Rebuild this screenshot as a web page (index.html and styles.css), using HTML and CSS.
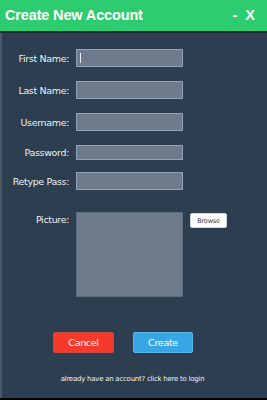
FILE: index.html
```html
<!DOCTYPE html>
<html>
<head>
<meta charset="utf-8">
<link rel="stylesheet" href="styles.css">
</head>
<body>
<div class="window">
  <div class="header">
    <span class="title">Create New Account</span>
    <span class="controls">-&nbsp; X</span>
  </div>
  <div class="content">
    <div class="form">
      <div class="row"><label class="label">First Name:</label><div class="input focused"><span class="caret"></span></div></div>
      <div class="row"><label class="label">Last Name:</label><div class="input"></div></div>
      <div class="row"><label class="label">Username:</label><div class="input"></div></div>
      <div class="row row-short"><label class="label">Password:</label><div class="input"></div></div>
      <div class="row"><label class="label">Retype Pass:</label><div class="input"></div></div>
      <div class="row row-picture"><label class="label">Picture:</label><div class="picture"></div><button class="browse">Browse</button></div>
    </div>
    <div class="actions">
      <button class="btn btn-cancel">Cancel</button>
      <button class="btn btn-create">Create</button>
    </div>
    <div class="footer">already have an account? click here to login</div>
  </div>
</div>
</body>
</html>
```
FILE: styles.css
```css
* { box-sizing: border-box; }
html, body { margin: 0; padding: 0; }
body {
  width: 267px;
  height: 400px;
  background: #000;
  font-family: "DejaVu Sans", "Liberation Sans", sans-serif;
  overflow: hidden;
}
.window {
  width: 267px;
  height: 398px;
  display: flex;
  flex-direction: column;
  background: #2c3e50;
}
.header {
  height: 33px;
  background: #2ecc71;
  border-bottom: 2px solid #1f2b38;
  display: flex;
  align-items: center;
  justify-content: space-between;
  padding: 0 12px 2px 5px;
  color: #fff;
  font-family: "Liberation Sans", sans-serif;
  font-weight: bold;
}
.title { font-size: 14.5px; letter-spacing: -0.15px; }
.controls { font-size: 14.5px; }
.content {
  flex: 1;
  display: flex;
  flex-direction: column;
  border-left: 2px solid #4b5868;
}
.form {
  padding-top: 16px;
  display: flex;
  flex-direction: column;
  gap: 14px;
}
.row {
  display: grid;
  grid-template-columns: 67px 107px auto;
  column-gap: 7px;
  align-items: center;
  height: 18px;
}
.row-short { height: 15px; margin-bottom: -1px; }
.row-short + .row { margin-top: -1px; }
.label {
  text-align: right;
  color: #eef1f4;
  font-size: 9.5px;
  letter-spacing: -0.35px;
  white-space: nowrap;
}
.input {
  height: 100%;
  background: #6d7b8c;
  border: 1px solid #93a4b8;
  position: relative;
}
.caret {
  position: absolute;
  left: 3px;
  top: 3px;
  width: 1px;
  height: 10px;
  background: #e8edf2;
}
.row-picture {
  margin-top: 8px;
  height: 85px;
  align-items: start;
}
.row-picture .label { padding-top: 2px; }
.picture {
  height: 85px;
  background: #6d7b8c;
  border: 1px solid #5f6d7e;
}
.browse {
  margin: 1px 0 0 0;
  width: 37px;
  height: 15px;
  background: #fff;
  border: 1px solid #cfd6dd;
  border-radius: 2px;
  padding: 0;
  font-family: "DejaVu Sans", sans-serif;
  font-size: 6.5px;
  letter-spacing: -0.2px;
  color: #3a3a3a;
}
.actions {
  margin-top: 35px;
  display: flex;
  gap: 19px;
  padding-left: 51px;
}
.btn {
  width: 61px;
  height: 21px;
  border: none;
  border-radius: 2px;
  color: #fff;
  font-family: "DejaVu Sans", sans-serif;
  font-size: 9.5px;
  letter-spacing: -0.3px;
  padding: 0;
}
.btn-cancel { background: #f5392a; border: 1px solid #c94a40; }
.btn-create { background: #37a6e4; border: 1px solid #5bb8ea; width: 60px; }
.footer {
  margin-top: 22px;
  text-align: center;
  color: #f0f2f5;
  font-size: 7px;
  letter-spacing: -0.25px;
  padding-right: 4px;
}
```
